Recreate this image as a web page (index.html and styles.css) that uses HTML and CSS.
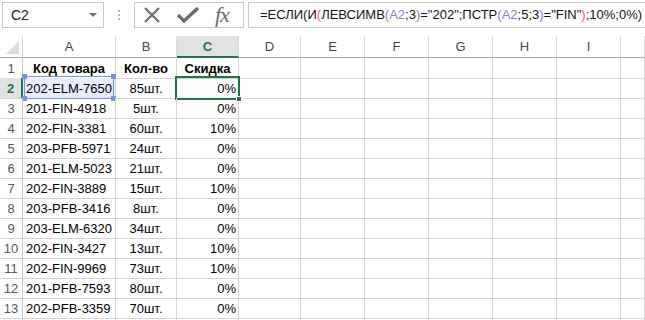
FILE: index.html
```html
<!DOCTYPE html>
<html lang="ru">
<head>
    <meta charset="utf-8" />
    <title>Книга1 - Excel</title>
    <link rel="stylesheet" href="styles.css">
</head>
<body>
    <div class="topbar">
        <div class="namebox">
            <span>C2</span>
            <span class="dropdown"></span>
        </div>
        <div class="grip"><i></i><i></i><i></i></div>
        <div class="actions">
            <svg class="icon" width="20" height="20" viewBox="0 0 20 20">
                <path d="M3 3 L17 17 M17 3 L3 17" stroke="#6a6a6a" stroke-width="2" fill="none" />
            </svg>
            <svg class="icon" width="24" height="20" viewBox="0 0 24 20">
                <path d="M2 10 L8 16 L22 3" stroke="#6a6a6a" stroke-width="3.4" fill="none" />
            </svg>
            <span class="fx">fx</span>
        </div>
        <div class="formula">=ЕСЛИ(И<span class="p1">(</span>ЛЕВСИМВ<span class="p2">(</span><span class="ref">A2</span>;3<span class="p2">)</span>="202";ПСТР<span class="p2">(</span><span class="ref">A2</span>;5;3<span class="p2">)</span>="FIN"<span class="p1">)</span>;10%;0%)</div>
    </div>

    <div class="sheet">
        <div class="row head">
            <div class="corner"><span class="tri"></span></div>
            <div>A</div><div>B</div><div class="sel">C</div><div>D</div><div>E</div><div>F</div><div>G</div><div>H</div><div>I</div><div></div>
        </div>
        <div class="row">
            <div class="num">1</div>
            <div class="title">Код товара</div><div class="title">Кол-во</div><div class="title">Скидка</div>
            <div></div><div></div><div></div><div></div><div></div><div></div><div></div>
        </div>
        <div class="row">
            <div class="num sel">2</div>
            <div class="txt ref-cell"><span class="refbox"><b class="tl"></b><b class="tr"></b><b class="bl"></b><b class="br"></b></span>202-ELM-7650</div>
            <div class="qty">85шт.</div>
            <div class="pct active">0%<span class="handle"></span></div>
            <div></div><div></div><div></div><div></div><div></div><div></div><div></div>
        </div>
        <div class="row">
            <div class="num">3</div>
            <div class="txt">201-FIN-4918</div><div class="qty">5шт.</div><div class="pct">0%</div>
            <div></div><div></div><div></div><div></div><div></div><div></div><div></div>
        </div>
        <div class="row">
            <div class="num">4</div>
            <div class="txt">202-FIN-3381</div><div class="qty">60шт.</div><div class="pct">10%</div>
            <div></div><div></div><div></div><div></div><div></div><div></div><div></div>
        </div>
        <div class="row">
            <div class="num">5</div>
            <div class="txt">203-PFB-5971</div><div class="qty">24шт.</div><div class="pct">0%</div>
            <div></div><div></div><div></div><div></div><div></div><div></div><div></div>
        </div>
        <div class="row">
            <div class="num">6</div>
            <div class="txt">201-ELM-5023</div><div class="qty">21шт.</div><div class="pct">0%</div>
            <div></div><div></div><div></div><div></div><div></div><div></div><div></div>
        </div>
        <div class="row">
            <div class="num">7</div>
            <div class="txt">202-FIN-3889</div><div class="qty">15шт.</div><div class="pct">10%</div>
            <div></div><div></div><div></div><div></div><div></div><div></div><div></div>
        </div>
        <div class="row">
            <div class="num">8</div>
            <div class="txt">203-PFB-3416</div><div class="qty">8шт.</div><div class="pct">0%</div>
            <div></div><div></div><div></div><div></div><div></div><div></div><div></div>
        </div>
        <div class="row">
            <div class="num">9</div>
            <div class="txt">203-ELM-6320</div><div class="qty">34шт.</div><div class="pct">0%</div>
            <div></div><div></div><div></div><div></div><div></div><div></div><div></div>
        </div>
        <div class="row">
            <div class="num">10</div>
            <div class="txt">202-FIN-3427</div><div class="qty">13шт.</div><div class="pct">10%</div>
            <div></div><div></div><div></div><div></div><div></div><div></div><div></div>
        </div>
        <div class="row">
            <div class="num">11</div>
            <div class="txt">202-FIN-9969</div><div class="qty">73шт.</div><div class="pct">10%</div>
            <div></div><div></div><div></div><div></div><div></div><div></div><div></div>
        </div>
        <div class="row">
            <div class="num">12</div>
            <div class="txt">201-PFB-7593</div><div class="qty">80шт.</div><div class="pct">0%</div>
            <div></div><div></div><div></div><div></div><div></div><div></div><div></div>
        </div>
        <div class="row">
            <div class="num">13</div>
            <div class="txt">202-PFB-3359</div><div class="qty">70шт.</div><div class="pct">0%</div>
            <div></div><div></div><div></div><div></div><div></div><div></div><div></div>
        </div>
        <div class="row">
            <div class="num"></div>
            <div></div><div></div><div></div>
            <div></div><div></div><div></div><div></div><div></div><div></div><div></div>
        </div>
    </div>
</body>
</html>
```

FILE: styles.css
```css
* {
    margin: 0;
    padding: 0;
    box-sizing: border-box;
}

body {
    font-family: 'Liberation Sans', Arial, sans-serif;
    font-size: 13px;
    color: #000;
    background: #fff;
    width: 645px;
    height: 320px;
    overflow: hidden;
}

/* formula bar */

.topbar {
    height: 36px;
    display: flex;
    align-items: flex-start;
    padding: 2px 0 0 2px;
}

.namebox {
    width: 102px;
    height: 26px;
    border: 1px solid #c6c6c6;
    display: flex;
    align-items: center;
    justify-content: space-between;
    padding: 0 6px 0 8px;
    color: #222;
    font-size: 14px;
}

.dropdown {
    width: 0;
    height: 0;
    border-left: 4px solid transparent;
    border-right: 4px solid transparent;
    border-top: 4px solid #6f6f6f;
}

.grip {
    width: 30px;
    height: 26px;
    display: flex;
    flex-direction: column;
    align-items: center;
    justify-content: center;
    gap: 2px;
}

.grip i {
    width: 2px;
    height: 2px;
    background: #b4b4b4;
}

.actions {
    width: 110px;
    height: 26px;
    border: 1px solid #c6c6c6;
    display: flex;
    align-items: center;
    gap: 14px;
    padding-left: 7px;
}

.fx {
    font-family: 'Liberation Serif', 'Times New Roman', serif;
    font-style: italic;
    font-size: 22px;
    color: #6a6a6a;
    letter-spacing: -1px;
    margin-left: 1px;
    line-height: 1;
}

.formula {
    flex: 1;
    height: 26px;
    margin-left: 4px;
    border: 1px solid #c6c6c6;
    border-right: none;
    padding: 0 0 0 11px;
    line-height: 24px;
    white-space: nowrap;
    overflow: hidden;
    color: #111;
}

.formula .ref { color: #7b83e4; }
.formula .p1 { color: #e86868; }
.formula .p2 { color: #a06ce0; }

/* grid */

.row {
    display: grid;
    grid-template-columns: 23px 93px 61px 62px 62px 64px 64px 64px 64px 64px 1fr;
    height: 20px;
}

.row > div {
    border-right: 1px solid #d4d4d4;
    border-bottom: 1px solid #d4d4d4;
    line-height: 19px;
    padding-top: 1px;
    white-space: nowrap;
    position: relative;
}

.row.head {
    height: 22px;
}

.row.head > div {
    border-bottom-color: #ababab;
    border-right-color: #dadada;
    text-align: center;
    color: #444;
    line-height: 20px;
    padding-top: 1px;
}

.row.head > div.sel {
    background: #e1e1e1;
    border-bottom: 2px solid #217346;
    color: #217346;
    font-weight: bold;
    line-height: 19px;
}

.corner .tri {
    position: absolute;
    right: 3px;
    bottom: 3px;
    width: 0;
    height: 0;
    border-left: 13px solid transparent;
    border-bottom: 13px solid #dcdcdc;
}

.row > .num {
    text-align: center;
    color: #555;
    border-right-color: #c6c6c6;
}

.row > .num.sel {
    background: #e1e1e1;
    border-right: 2px solid #217346;
    color: #217346;
    font-weight: bold;
}

.title {
    font-weight: bold;
    text-align: center;
}

.txt {
    padding-left: 3px;
}

.qty {
    text-align: center;
}

.pct {
    text-align: right;
    padding-right: 2px;
}

/* range reference and selection */

.ref-cell {
    background: #e9ecfa;
}

.refbox {
    position: absolute;
    left: 1px;
    top: -2px;
    right: 1px;
    bottom: -1px;
    border: 1px solid #7592e6;
}

.refbox b {
    position: absolute;
    width: 5px;
    height: 5px;
    background: #7592e6;
}

.refbox .tl { left: -3px; top: -3px; }
.refbox .tr { right: -3px; top: -3px; }
.refbox .bl { left: -3px; bottom: -3px; }
.refbox .br { right: -3px; bottom: -3px; }

.active::after {
    content: "";
    position: absolute;
    left: -2px;
    top: -2px;
    right: -2px;
    bottom: -2px;
    border: 2px solid #217346;
}

.handle {
    position: absolute;
    right: -4px;
    bottom: -4px;
    width: 6px;
    height: 6px;
    background: #217346;
    border: 1px solid #fff;
    z-index: 2;
}
```
